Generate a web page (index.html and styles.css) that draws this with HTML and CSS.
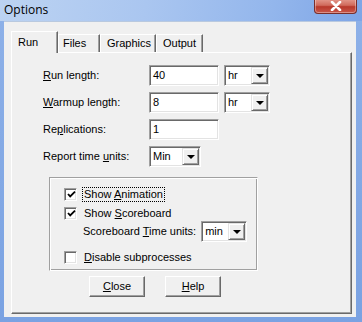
FILE: index.html
```html
<!DOCTYPE html>
<html>
<head>
<meta charset="utf-8">
<link rel="stylesheet" href="styles.css">
</head>
<body>
<div class="window">
  <div class="titlebar">
    <span class="title">Options</span>
    <div class="close-btn"><svg width="14" height="10" viewBox="0 0 14 10"><path d="M3 1 L11 9 M11 1 L3 9" stroke="#fff" stroke-width="2.6" stroke-linecap="round"/></svg></div>
  </div>
  <div class="client">
    <div class="tabs">
      <div class="tab selected">Run</div>
      <div class="tab w-files">Files</div>
      <div class="tab w-graphics">Graphics</div>
      <div class="tab w-output">Output</div>
    </div>
    <div class="panel">
      <div class="form">
        <label class="lbl"><span><u>R</u>un length:</span></label>
        <div class="field">40</div>
        <div class="combo"><span class="combo-text">hr</span><span class="combo-btn"><i class="arrow"></i></span></div>

        <label class="lbl"><span><u>W</u>armup length:</span></label>
        <div class="field">8</div>
        <div class="combo"><span class="combo-text">hr</span><span class="combo-btn"><i class="arrow"></i></span></div>

        <label class="lbl"><span>Re<u>p</u>lications:</span></label>
        <div class="field">1</div>
        <div></div>

        <label class="lbl"><span>Report time <u>u</u>nits:</span></label>
        <div class="combo combo-min"><span class="combo-text">Min</span><span class="combo-btn"><i class="arrow"></i></span></div>
        <div></div>
      </div>

      <div class="group">
        <div class="row r1">
          <span class="cb checked"><svg width="9" height="9" viewBox="0 0 9 9"><path d="M1 4 L3.2 6.4 L8 1.6" stroke="#000" stroke-width="1.8" fill="none"/></svg></span>
          <span class="cb-label focus">Show <u>A</u>nimation</span>
        </div>
        <div class="row r2">
          <span class="cb checked"><svg width="9" height="9" viewBox="0 0 9 9"><path d="M1 4 L3.2 6.4 L8 1.6" stroke="#000" stroke-width="1.8" fill="none"/></svg></span>
          <span class="cb-label">Show <u>S</u>coreboard</span>
        </div>
        <div class="row r3">
          <span class="sub-label">Scoreboard <u>T</u>ime units:</span>
          <div class="combo combo-small"><span class="combo-text">min</span><span class="combo-btn"><i class="arrow"></i></span></div>
        </div>
        <div class="row r4">
          <span class="cb"></span>
          <span class="cb-label"><u>D</u>isable subprocesses</span>
        </div>
      </div>

      <div class="buttons">
        <div class="btn"><span><u>C</u>lose</span></div>
        <div class="btn"><span><u>H</u>elp</span></div>
      </div>
    </div>
  </div>
</div>
</body>
</html>
```
FILE: styles.css
```css
html, body {
  margin: 0;
  padding: 0;
  width: 362px;
  height: 322px;
  overflow: hidden;
  background: #fff;
}

.window {
  width: 362px;
  height: 322px;
  background: linear-gradient(180deg, #8eb1e8 0%, #7aa2e2 100%);
  display: flex;
  flex-direction: column;
  font-family: "Liberation Sans", Arial, sans-serif;
  font-size: 11px;
  color: #000;
}

.titlebar {
  height: 21px;
  flex: none;
  display: flex;
  align-items: flex-start;
  background: linear-gradient(100deg, #bcd3f2 0%, #aac6f0 40%, #93b6ec 75%, #7ea5e6 100%);
}

.title {
  font-family: "Open Sans", "Noto Sans", sans-serif;
  font-size: 12px;
  line-height: 16px;
  margin: 2px 0 0 4px;
  color: #000;
}

.close-btn {
  margin-left: auto;
  margin-right: 5px;
  margin-top: -1px;
  width: 41px;
  height: 14px;
  border: 1px solid #7a2e2a;
  border-top: none;
  border-radius: 0 0 4px 4px;
  background: linear-gradient(180deg, #e49a8e 0%, #d06a5c 45%, #b8382b 55%, #c9574a 100%);
  box-shadow: inset 0 0 0 1px rgba(255,255,255,0.35);
  display: flex;
  align-items: center;
  justify-content: center;
}

.client {
  flex: none;
  height: 296px;
  margin: 0 6px 5px 4px;
  background: #f0f0f0;
  box-shadow: inset 0 1px #b9c9df;
  padding: 10px 0 0 7px;
  box-sizing: border-box;
  display: flex;
  flex-direction: column;
}

.tabs {
  height: 21px;
  display: flex;
  align-items: flex-end;
  position: relative;
  z-index: 2;
}

.tab {
  height: 18px;
  box-sizing: border-box;
  padding: 2px 0 0 6px;
  line-height: 13px;
  background: #f0f0f0;
  border-top: 1px solid #fff;
  border-left: 1px solid #fff;
  border-right: 1px solid #696969;
  box-shadow: inset -1px 0 #a0a0a0;
  white-space: nowrap;
}

.tab.selected {
  width: 47px;
  height: 22px;
  margin-bottom: -1px;
  padding: 4px 0 0 6px;
}

.w-files { width: 42px; padding-left: 4px; }
.w-graphics { width: 56px; }
.w-output { width: 47px; }

.panel {
  width: 341px;
  height: 262px;
  box-sizing: border-box;
  border-top: 1px solid #fff;
  border-left: 1px solid #fff;
  border-right: 1px solid #696969;
  border-bottom: 1px solid #696969;
  box-shadow: inset -1px -1px #a0a0a0;
  padding: 12px 0 0 31px;
  display: flex;
  flex-direction: column;
}

.form {
  display: grid;
  grid-template-columns: 101px 70px 46px;
  grid-auto-rows: 21px;
  column-gap: 5px;
  row-gap: 6px;
}

.lbl {
  display: flex;
  align-items: center;
  line-height: 13px;
}

.field, .combo {
  box-sizing: border-box;
  height: 21px;
  background: #fff;
  border: 1px solid;
  border-color: #a0a0a0 #fff #fff #a0a0a0;
  box-shadow: inset 1px 1px #696969, inset -1px -1px #e3e3e3;
  padding: 3px 0 0 3px;
  line-height: 13px;
}

.combo {
  display: flex;
  padding: 1px 1px 1px 2px;
  align-items: stretch;
}

.combo-min { width: 52px; }
.combo-small { width: 46px; }

.combo-text {
  flex: 1;
  padding: 2px 0 0 1px;
  line-height: 13px;
}

.combo-btn {
  width: 17px;
  box-sizing: border-box;
  background: #f0f0f0;
  border: 1px solid;
  border-color: #e3e3e3 #696969 #696969 #e3e3e3;
  box-shadow: inset 1px 1px #fff, inset -1px -1px #a0a0a0;
  display: flex;
  align-items: center;
  justify-content: center;
}

.arrow {
  width: 0;
  height: 0;
  border-left: 4px solid transparent;
  border-right: 4px solid transparent;
  border-top: 4px solid #000;
  margin-top: 1px;
}

.group {
  margin: 10px 0 0 6px;
  width: 209px;
  height: 94px;
  box-sizing: border-box;
  border: 1px solid #a0a0a0;
  border-right-color: #fff;
  border-bottom-color: #fff;
  box-shadow: inset 1px 1px #fff, inset -1px -1px #a0a0a0;
  padding: 7px 0 0 14px;
  display: flex;
  flex-direction: column;
}

.row {
  display: flex;
  align-items: center;
  height: 19px;
}

.r3 {
  height: 21px;
  margin-top: -2px;
  padding-left: 19px;
}

.r4 { margin-top: 6px; }

.cb {
  width: 13px;
  height: 13px;
  box-sizing: border-box;
  flex: none;
  background: #fff;
  border: 1px solid;
  border-color: #a0a0a0 #fff #fff #a0a0a0;
  box-shadow: inset 1px 1px #696969, inset -1px -1px #e3e3e3;
  display: flex;
  align-items: center;
  justify-content: center;
  margin-right: 5px;
}

.cb svg { margin: 0 0 0 1px; }

.cb-label {
  line-height: 13px;
  padding: 0 1px;
  border: 1px solid transparent;
}

.cb-label.focus {
  border: 1px dotted #000;
}

.sub-label {
  line-height: 13px;
  margin-right: 5px;
}

.buttons {
  display: flex;
  gap: 20px;
  margin: 5px 0 0 46px;
}

.btn {
  width: 56px;
  height: 21px;
  box-sizing: border-box;
  background: #f0f0f0;
  border: 1px solid;
  border-color: #fff #696969 #696969 #fff;
  box-shadow: inset -1px -1px #a0a0a0;
  display: flex;
  align-items: center;
  justify-content: center;
  line-height: 13px;
}
```
